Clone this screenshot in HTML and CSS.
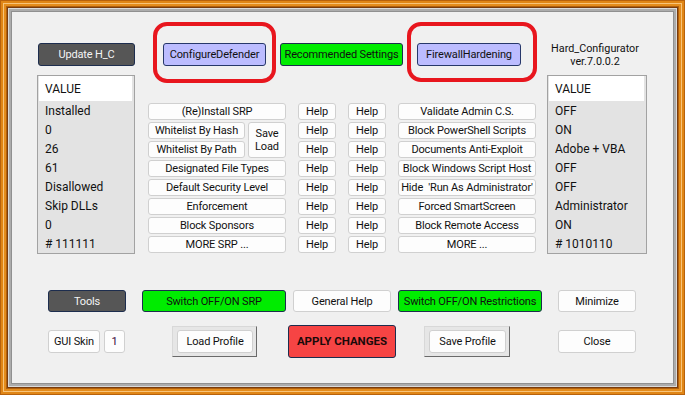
FILE: index.html
```html
<!DOCTYPE html>
<html>
<head>
<meta charset="utf-8">
<link rel="stylesheet" href="styles.css">
</head>
<body>
<div class="window">
  <div class="top">
    <div class="btn dark w-update">Update H_C</div>
    <div class="ring ring-a"><div class="btn lav w-defender">ConfigureDefender</div></div>
    <div class="btn green w-recommended">Recommended Settings</div>
    <div class="ring ring-b"><div class="btn lav w-firewall">FirewallHardening</div></div>
    <div class="title">Hard_Configurator<br>ver.7.0.0.2</div>
  </div>

  <div class="main">
    <div class="list list-left">
      <div class="hd">VALUE</div>
      <div class="row">Installed</div>
      <div class="row">0</div>
      <div class="row">26</div>
      <div class="row">61</div>
      <div class="row">Disallowed</div>
      <div class="row">Skip DLLs</div>
      <div class="row">0</div>
      <div class="row"># 111111</div>
    </div>

    <div class="grid">
      <div class="btn light">(Re)Install SRP</div>
      <div class="btn light">Help</div>
      <div class="btn light">Help</div>
      <div class="btn light">Validate Admin C.S.</div>

      <div class="pair">
        <div class="btn light">Whitelist By Hash</div>
        <div class="btn light saveload">Save<br>Load</div>
        <div class="btn light">Whitelist By Path</div>
      </div>
      <div class="btn light">Help</div>
      <div class="btn light">Help</div>
      <div class="btn light">Block PowerShell Scripts</div>

      <div class="btn light">Help</div>
      <div class="btn light">Help</div>
      <div class="btn light">Documents Anti-Exploit</div>

      <div class="btn light">Designated File Types</div>
      <div class="btn light">Help</div>
      <div class="btn light">Help</div>
      <div class="btn light">Block Windows Script Host</div>

      <div class="btn light">Default Security Level</div>
      <div class="btn light">Help</div>
      <div class="btn light">Help</div>
      <div class="btn light pre">Hide  'Run As Administrator'</div>

      <div class="btn light">Enforcement</div>
      <div class="btn light">Help</div>
      <div class="btn light">Help</div>
      <div class="btn light">Forced SmartScreen</div>

      <div class="btn light">Block Sponsors</div>
      <div class="btn light">Help</div>
      <div class="btn light">Help</div>
      <div class="btn light">Block Remote Access</div>

      <div class="btn light">MORE SRP ...</div>
      <div class="btn light">Help</div>
      <div class="btn light">Help</div>
      <div class="btn light">MORE ...</div>
    </div>

    <div class="list list-right">
      <div class="hd">VALUE</div>
      <div class="row">OFF</div>
      <div class="row">ON</div>
      <div class="row">Adobe + VBA</div>
      <div class="row">OFF</div>
      <div class="row">OFF</div>
      <div class="row">Administrator</div>
      <div class="row">ON</div>
      <div class="row"># 1010110</div>
    </div>
  </div>

  <div class="bar1">
    <div class="btn dark w-tools">Tools</div>
    <div class="btn green w-switch">Switch OFF/ON SRP</div>
    <div class="btn light w-general">General Help</div>
    <div class="btn green w-switch">Switch OFF/ON Restrictions</div>
    <div class="btn light w-min">Minimize</div>
  </div>

  <div class="bar2">
    <div class="btn light w-skin">GUI Skin</div>
    <div class="btn light w-one">1</div>
    <div class="raised w-load"><div class="btn light">Load Profile</div></div>
    <div class="btn red w-apply">APPLY CHANGES</div>
    <div class="raised w-save"><div class="btn light">Save Profile</div></div>
    <div class="btn light w-close">Close</div>
  </div>
</div>
</body>
</html>
```

FILE: styles.css
```css
* { box-sizing: border-box; }

html, body {
  margin: 0;
  padding: 0;
}

body {
  width: 685px;
  height: 395px;
  overflow: hidden;
  font-family: Roboto, "Noto Sans", sans-serif;
  font-size: 11px;
  letter-spacing: -0.15px;
  color: #111;
}

.window {
  width: 685px;
  height: 395px;
  background: #f0f0f0;
  padding: 12px;
  box-shadow:
    inset 0 0 0 1px #b8620c,
    inset 0 0 0 3px #e08616,
    inset 0 0 0 4px #f8c47a,
    inset 0 0 0 6px #e48c1c,
    inset 0 0 0 7px #b0600e,
    inset 0 0 0 8px #7a3c0c,
    inset 0 0 0 9px #dadada,
    inset 0 0 0 11px #acacac,
    inset 0 0 0 12px #909090;
}

.btn {
  display: flex;
  align-items: center;
  justify-content: center;
  border-radius: 3px;
  white-space: nowrap;
  line-height: 1;
}
.pre { white-space: pre; }

.light { background: #fdfdfd; border: 1px solid #d0d0d0; }
.dark  { background: #565656; border: 1px solid #1d2d4e; color: #f4f4f4; }
.lav   { background: #bcbcff; border: 1px solid #27376a; }
.green { background: #00ec00; border: 1px solid #1d2d4e; }
.red   { background: #f64444; border: 1px solid #1d2d4e; font-weight: bold; color: #1a0a0a; font-size: 11.5px; letter-spacing: 0; }

/* top row */
.top {
  display: flex;
  align-items: center;
  height: 23px;
  margin-top: 31px;
  padding-left: 26px;
}
.top .btn { height: 23px; }
.w-update { width: 97px; }
.ring { position: relative; }
.ring::after {
  content: "";
  position: absolute;
  border: 4px solid #e8161e;
  border-radius: 14px;
  pointer-events: none;
}
.ring-a { margin-left: 28px; }
.ring-a::after { left: -10px; right: -10px; top: -21px; bottom: -17px; }
.ring-b { margin-left: 14px; }
.ring-b::after { left: -10px; right: -16px; top: -21px; bottom: -16px; }
.w-defender { width: 103px; }
.w-recommended { width: 123px; margin-left: 14px; }
.w-firewall { width: 104px; }
.title {
  margin-left: 24px;
  width: 100px;
  text-align: center;
  font-size: 10.8px;
  letter-spacing: 0;
  line-height: 13px;
}

/* main */
.main {
  display: flex;
  align-items: flex-start;
  margin-top: 9px;
  padding-left: 25px;
  height: 179px;
}
.list {
  height: 179px;
  border: 1px solid #a2a2a2;
  background: #e3e3e3;
  padding: 0 1px;
  font-size: 12px;
  letter-spacing: 0;
}
.list-left { width: 98px; }
.list-right { width: 100px; margin-left: 11px; }
.list .hd {
  height: 25px;
  background: #fff;
  padding-left: 6px;
  display: flex;
  align-items: center;
  margin-right: 1px;
}
.list .row {
  height: 19px;
  line-height: 20px;
  padding-left: 6px;
}

.grid {
  margin-left: 13px;
  margin-top: 28px;
  display: grid;
  grid-template-columns: 138px 38px 38px 138px;
  grid-auto-rows: 17px;
  column-gap: 12px;
  row-gap: 2px;
}
.pair {
  grid-row: span 2;
  display: grid;
  grid-template-columns: 97px 38px;
  grid-template-rows: 17px 17px;
  column-gap: 3px;
  row-gap: 2px;
}
.saveload {
  grid-column: 2;
  grid-row: 1 / span 2;
  line-height: 13px;
  text-align: center;
}
.pair .btn:nth-child(3) { grid-column: 1; grid-row: 2; }

/* bottom bars */
.bar1 {
  display: flex;
  align-items: center;
  height: 22px;
  margin-top: 36px;
  padding-left: 36px;
}
.bar1 .btn { height: 22px; }
.w-tools { width: 78px; }
.w-switch { width: 144px; }
.w-general { width: 98px; }
.bar1 .w-switch:nth-child(2) { margin-left: 16px; }
.w-general { margin-left: 7px; }
.bar1 .w-switch:nth-child(4) { margin-left: 7px; }
.w-min { width: 78px; margin-left: 16px; }

.bar2 {
  display: flex;
  align-items: center;
  height: 33px;
  margin-top: 13px;
  padding-left: 36px;
}
.w-skin { width: 52px; height: 23px; }
.w-one { width: 21px; height: 23px; margin-left: 4px; color: #3a0a3a; }
.raised {
  height: 31px;
  border: 1px solid;
  border-color: #d8d8d8 #6a6a6a #6a6a6a #d8d8d8;
  background: #e6e6e6;
  padding: 3px 3px 3px 4px;
  display: flex;
}
.raised .btn { flex: 1; }
.w-load { width: 85px; margin-left: 47px; }
.w-apply { width: 108px; height: 33px; margin-left: 31px; }
.w-save { width: 86px; margin-left: 28px; }
.w-close { width: 78px; height: 23px; margin-left: 48px; }
```
